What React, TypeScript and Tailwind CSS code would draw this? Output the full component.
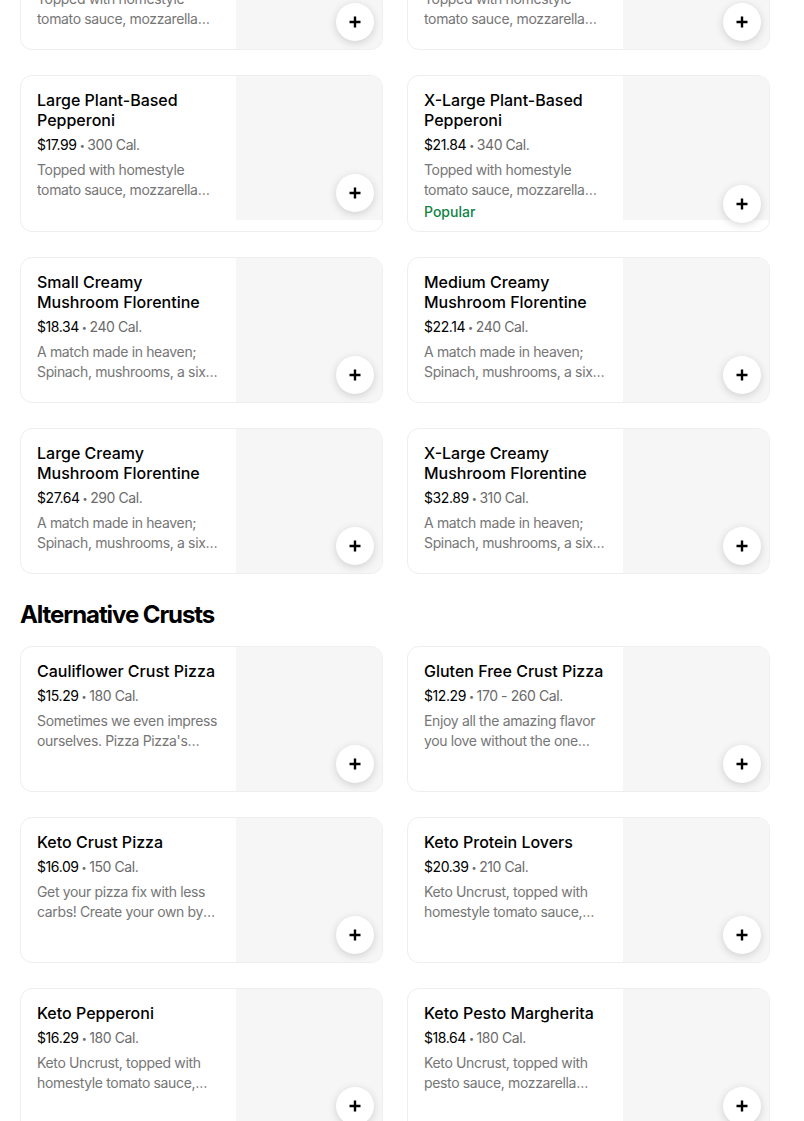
const ROWS_TOP = [
  [
    { name: 'Small Plant-Based Pepperoni', price: '$13.99', cal: '220 Cal.', desc: "Topped with homestyle tomato sauce, mozzarella cheese and plant-based pepperoni." },
    { name: 'Medium Plant-Based Pepperoni', price: '$15.79', cal: '260 Cal.', desc: "Topped with homestyle tomato sauce, mozzarella cheese and plant-based pepperoni." },
  ],
  [
    { name: 'Large Plant-Based Pepperoni', price: '$17.99', cal: '300 Cal.', desc: "Topped with homestyle tomato sauce, mozzarella cheese and plant-based pepperoni." },
    { name: 'X-Large Plant-Based Pepperoni', price: '$21.84', cal: '340 Cal.', desc: "Topped with homestyle tomato sauce, mozzarella cheese and plant-based pepperoni.", popular: true },
  ],
  [
    { name: 'Small Creamy Mushroom Florentine', price: '$18.34', cal: '240 Cal.', desc: "A match made in heaven; Spinach, mushrooms, a six cheese blend and creamy garlic sauce." },
    { name: 'Medium Creamy Mushroom Florentine', price: '$22.14', cal: '240 Cal.', desc: "A match made in heaven; Spinach, mushrooms, a six cheese blend and creamy garlic sauce." },
  ],
  [
    { name: 'Large Creamy Mushroom Florentine', price: '$27.64', cal: '290 Cal.', desc: "A match made in heaven; Spinach, mushrooms, a six cheese blend and creamy garlic sauce." },
    { name: 'X-Large Creamy Mushroom Florentine', price: '$32.89', cal: '310 Cal.', desc: "A match made in heaven; Spinach, mushrooms, a six cheese blend and creamy garlic sauce." },
  ],
]

const ALT_CRUSTS = [
  { name: 'Cauliflower Crust Pizza', price: '$15.29', cal: '180 Cal.', desc: "Sometimes we even impress ourselves. Pizza Pizza's cauliflower crust is made with real cauliflower." },
  { name: 'Gluten Free Crust Pizza', price: '$12.29', cal: '170 - 260 Cal.', desc: 'Enjoy all the amazing flavor you love without the one ingredient you need to avoid.' },
  { name: 'Keto Crust Pizza', price: '$16.09', cal: '150 Cal.', desc: 'Get your pizza fix with less carbs! Create your own by choosing your favourite toppings.' },
  { name: 'Keto Protein Lovers', price: '$20.39', cal: '210 Cal.', desc: 'Keto Uncrust, topped with homestyle tomato sauce, mozzarella, pepperoni and bacon.' },
  { name: 'Keto Pepperoni', price: '$16.29', cal: '180 Cal.', desc: 'Keto Uncrust, topped with homestyle tomato sauce, mozzarella and pepperoni.' },
  { name: 'Keto Pesto Margherita', price: '$18.64', cal: '180 Cal.', desc: 'Keto Uncrust, topped with pesto sauce, mozzarella cheese and fresh tomatoes.' },
]

type Item = { name: string; price: string; cal: string; desc: string; popular?: boolean }

function PlusIcon() {
  return (
    <svg className="w-[14px] h-[14px]" viewBox="0 0 14 14" fill="none">
      <path d="M7 1.5v11M1.5 7h11" stroke="#000" strokeWidth={2.4} />
    </svg>
  )
}

function ItemCard({ item }: { item: Item }) {
  return (
    <div className="rounded-xl border border-[#eeeeee] overflow-hidden bg-white">
      <div className="relative flex">
        <div className="flex-1 min-w-0 pt-[14px] pb-[9px] px-4">
          <div className="text-[16px] leading-5 font-medium text-black">{item.name}</div>
          <div className="mt-[5px] text-[14px] leading-5 text-[#6b6b6b] tracking-[-0.03em]">
            <span className="text-black">{item.price}</span>
            <span className="text-[9px] align-[1px] mx-[3px]">•</span>
            {item.cal}
          </div>
          <div className="mt-1 text-[14px] leading-5 text-[#767676] tracking-[-0.025em] line-clamp-2">{item.desc}</div>
          {item.popular && (
            <div className="mt-0.5 text-[14px] leading-5 font-medium text-[#0e8345]">Popular</div>
          )}
        </div>
        <div className="w-[146px] h-[144px] shrink-0 bg-[#f6f6f6]" />
        <button className="absolute right-2 bottom-2 w-[38px] h-[38px] rounded-full bg-white flex items-center justify-center shadow-[0_2px_8px_rgba(0,0,0,0.16)]">
          <PlusIcon />
        </button>
      </div>
    </div>
  )
}

export default function App() {
  return (
    <div className="min-h-screen bg-white overflow-hidden" style={{ fontFamily: 'Inter, "Liberation Sans", sans-serif' }}>
      <div className="w-[750px] ml-5 -mt-[96px] pb-10">
        <div className="grid grid-cols-2 gap-x-6 gap-y-[25px]">
          {ROWS_TOP.flat().map(item => (
            <ItemCard key={item.name} item={item} />
          ))}
        </div>

        <h2 className="mt-[25px] mb-[15px] text-[24px] leading-8 font-bold tracking-[-0.045em] text-black">Alternative Crusts</h2>

        <div className="grid grid-cols-2 gap-x-6 gap-y-[25px]">
          {ALT_CRUSTS.map(item => (
            <ItemCard key={item.name} item={item} />
          ))}
        </div>
      </div>
    </div>
  )
}
